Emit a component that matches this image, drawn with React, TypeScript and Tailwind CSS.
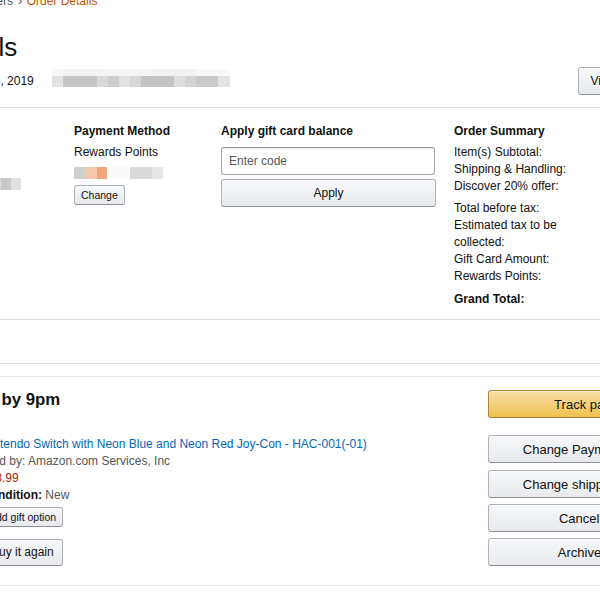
import React from "react";

// mosaic blocks standing in for the redacted bits of the screenshot
type Block = [number, string];

function Mosaic({ blocks, h = 12 }: { blocks: Block[]; h?: number }) {
  return (
    <div className="flex" style={{ height: h }}>
      {blocks.map(([w, c], i) => (
        <div key={i} style={{ width: w, background: c }} />
      ))}
    </div>
  );
}

const btn =
  "border border-[#adb1b8] border-b-[#8d9096] rounded-[3px] bg-linear-to-b from-[#f7f8fa] to-[#e7e9ec] shadow-[inset_0_1px_0_rgba(255,255,255,0.6)] text-[#111] flex items-center justify-center";

const yellowBtn =
  "border border-[#a88734] border-b-[#9c7e31] rounded-[3px] bg-linear-to-b from-[#f7dfa5] to-[#f0c14b] shadow-[inset_0_1px_0_rgba(255,255,255,0.4)] text-[#111] flex items-center justify-center";

export default function App() {
  return (
    <div className="w-[600px] h-[600px] overflow-hidden bg-white text-[#111] font-['Liberation_Sans',Arial,sans-serif] text-[12px] leading-[17px]">
      <div className="ml-[-136px] w-[860px] mt-[-7px]">
        {/* Breadcrumb */}
        <div className="h-[17px] text-[#555]">
          Your Account <span className="mx-[2px]">›</span> Your Orders{" "}
          <span className="ml-[2px] mr-[1px]">›</span>{" "}
          <span className="text-[#c45500]">Order Details</span>
        </div>

        {/* Title */}
        <h1 className="mt-[21px] text-[26px] leading-[32px] font-normal">Order Details</h1>

        {/* Order date + number */}
        <div className="mt-[4px] h-[28px] flex items-center justify-between">
          <div className="flex items-center pl-[7px]">
            <span>Ordered on November 3, 2019</span>
            <div className="ml-[18px] mt-[-7px] flex flex-col">
              <Mosaic
                h={7}
                blocks={[
                  [11, "#f7f7f7"],
                  [44, "#f3f3f3"],
                  [44, "#f5f5f5"],
                  [44, "#f2f2f2"],
                  [35, "#f8f8f8"],
                ]}
              />
              <Mosaic
                h={11}
                blocks={[
                  [11, "#e2e2e2"],
                  [34, "#c6c6c6"],
                  [11, "#d9d9d9"],
                  [11, "#cdcdcd"],
                  [11, "#e2e2e2"],
                  [11, "#d6d6d6"],
                  [33, "#c4c4c4"],
                  [11, "#dedede"],
                  [11, "#d3d3d3"],
                  [22, "#c9c9c9"],
                  [12, "#e3e3e3"],
                ]}
              />
            </div>
          </div>
          <button className={`${btn} h-[28px] px-[12px] mr-[12px] text-[12px]`}>
            View or Print invoice
          </button>
        </div>

        {/* Payment / summary box */}
        <div className="mt-[12px] border border-[#ddd] rounded-t-[8px]">
          <div className="grid grid-cols-[191px_147px_233px_1fr] pl-[18px] pt-[15px] pb-[11px]">
            {/* Shipping address */}
            <div>
              <div className="font-bold">Shipping Address</div>
              <div className="mt-[4px] flex flex-col gap-[5px]">
                <Mosaic blocks={[[40, "#d2d2d2"], [50, "#e3e3e3"]]} />
                <Mosaic blocks={[[60, "#cfcfcf"], [40, "#e1e1e1"]]} />
                <Mosaic blocks={[[60, "#d4d4d4"], [58, "#dadada"], [10, "#c8c8c8"], [10, "#e0e0e0"]]} />
                <Mosaic blocks={[[60, "#dcdcdc"]]} />
              </div>
            </div>

            {/* Payment method */}
            <div>
              <div className="font-bold">Payment Method</div>
              <div className="mt-[4px]">Rewards Points</div>
              <div className="mt-[6px]">
                <Mosaic
                  blocks={[
                    [11, "#d0d0d0"],
                    [12, "#f3c9ae"],
                    [10, "#eea77c"],
                    [23, "#fafafa"],
                    [11, "#d9d9d9"],
                    [11, "#dadada"],
                    [11, "#e7e7e7"],
                  ]}
                />
              </div>
              <button className={`${btn} mt-[6px] h-[20px] px-[6px] text-[10.5px] leading-none`}>
                Change
              </button>
            </div>

            {/* Gift card */}
            <div>
              <div className="font-bold">Apply gift card balance</div>
              <input
                placeholder="Enter code"
                className="mt-[7px] block w-[214px] h-[28px] px-[7px] border border-[#a6a6a6] border-t-[#949494] rounded-[3px] shadow-[inset_0_1px_0_rgba(0,0,0,0.07)] text-[12px] placeholder:text-[#575757] outline-none"
              />
              <button className={`${btn} mt-[4px] w-[215px] h-[28px] text-[12px]`}>Apply</button>
            </div>

            {/* Order summary */}
            <div className="pr-[18px]">
              <div className="font-bold">Order Summary</div>
              <div className="mt-[4px]">
                <div>Item(s) Subtotal:</div>
                <div>Shipping &amp; Handling:</div>
                <div>Discover 20% offer:</div>
              </div>
              <div className="mt-[5px]">
                <div>Total before tax:</div>
                <div className="w-[115px]">Estimated tax to be collected:</div>
                <div>Gift Card Amount:</div>
                <div>Rewards Points:</div>
              </div>
              <div className="mt-[6px] font-bold">Grand Total:</div>
            </div>
          </div>
        </div>

        {/* Transactions strip */}
        <div className="h-[44px] border border-t-0 border-[#ddd] rounded-b-[8px] pl-[18px] flex items-center text-[#0066c0]">
          Transactions
        </div>

        {/* Shipment box */}
        <div className="mt-[12px] border border-[#e7e7e7] rounded-[8px] pl-[18px] pr-[18px] pt-[13px] pb-[19px] flex justify-between">
          <div>
            <div className="font-bold text-[16.8px] leading-[20px]">Arriving today by 9pm</div>
            <div className="mt-[26px] flex gap-[9px]">
              <div className="w-[90px] h-[90px] bg-[#f3f3f3]" />
              <div>
                <div className="text-[#0066c0]">
                  Nintendo Switch with Neon Blue and Neon Red Joy-Con - HAC-001(-01)
                </div>
                <div className="text-[#555]">Sold by: Amazon.com Services, Inc</div>
                <div className="text-[#b12704]">$28.99</div>
                <div>
                  <span className="font-bold">Condition:</span>{" "}
                  <span className="text-[#555]">New</span>
                </div>
                <button className={`${btn} mt-[3px] h-[20px] px-[6px] text-[10.5px] leading-none`}>
                  Add gift option
                </button>
                <button className={`${btn} mt-[12px] h-[27px] px-[8px] text-[12px]`}>
                  Buy it again
                </button>
              </div>
            </div>
          </div>

          <div className="w-[217px] flex flex-col">
            <button className={`${yellowBtn} h-[28px] text-[13px]`}>Track package</button>
            <button className={`${btn} mt-[17px] h-[28px] text-[13px]`}>Change Payment method</button>
            <button className={`${btn} mt-[7px] h-[28px] text-[13px]`}>Change shipping address</button>
            <button className={`${btn} mt-[6px] h-[28px] text-[13px]`}>Cancel items</button>
            <button className={`${btn} mt-[6px] h-[28px] text-[13px]`}>Archive order</button>
          </div>
        </div>
      </div>
    </div>
  );
}
